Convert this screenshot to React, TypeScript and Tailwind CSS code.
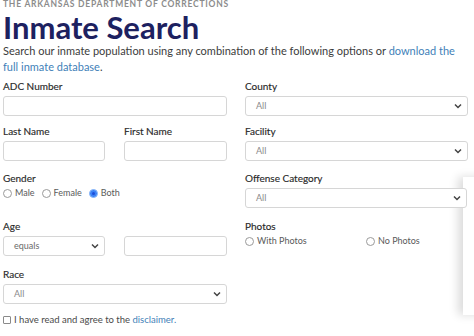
import React from "react";

const Chevron = () => (
  <svg width="8" height="6" viewBox="0 0 8 6" className="absolute right-[5px] top-1/2 -translate-y-1/2">
    <path d="M1 1.5 L4 4.5 L7 1.5" fill="none" stroke="#444" strokeWidth="1.5" />
  </svg>
);

const Label = ({ children }: { children: React.ReactNode }) => (
  <div className="text-[10px] leading-[12px] font-normal text-[#2a2a2a] mb-[4px] [-webkit-text-stroke:0.15px_#2a2a2a]">{children}</div>
);

const Input = () => <div className="h-[20px] border border-[#d6d6d6] rounded-[3px] bg-white w-full" />;

const Select = ({ value }: { value: string }) => (
  <div className="relative h-[20px] border border-[#d6d6d6] rounded-[3px] bg-white w-full flex items-center pl-[10px] text-[9px] text-[#8a8a8a]">
    {value}
    <Chevron />
  </div>
);

const Radio = ({ label, checked }: { label: string; checked?: boolean }) => (
  <span className="inline-flex items-center gap-[3px] text-[9px] leading-[10px] text-[#5a5a5a]">
    {checked ? (
      <span className="w-[9px] h-[9px] rounded-full bg-[#3b82f6] border border-[#8bb8f8] flex items-center justify-center">
        <span className="w-[3px] h-[3px] rounded-full bg-[#1d4ed8]" />
      </span>
    ) : (
      <span className="w-[9px] h-[9px] rounded-full border border-[#9a9a9a] bg-white" />
    )}
    {label}
  </span>
);

export default function App() {
  return (
    <div className="relative w-[474px] h-[336px] overflow-hidden bg-white px-[3px]" style={{ fontFamily: "Lato, 'Open Sans', sans-serif" }}>
      <div className="absolute left-[463px] top-[177px] w-[30px] h-[138px] bg-white shadow-[-5px_0_9px_rgba(0,0,0,0.14)]" />
      <div className="text-[8.5px] leading-[10px] font-bold tracking-[0.09em] text-[#8c8c8c] -mt-[1px]">
        THE ARKANSAS DEPARTMENT OF CORRECTIONS
      </div>
      <h1 className="text-[31px] leading-[32px] font-bold text-[#1d2160] mt-[2px]">Inmate Search</h1>
      <p className="text-[11px] leading-[16px] text-[#3c3c3c]">
        Search our inmate population using any combination of the following options or{" "}
        <span className="text-[#3f7fb8]">download the full inmate database</span>.
      </p>

      <div className="grid grid-cols-[224px_223px] gap-x-[18px] mt-[5px]">
        <div>
          <Label>ADC Number</Label>
          <Input />
        </div>
        <div>
          <Label>County</Label>
          <Select value="All" />
        </div>

        <div className="mt-[9px] grid grid-cols-[102px_103px] gap-x-[19px]">
          <div>
            <Label>Last Name</Label>
            <Input />
          </div>
          <div>
            <Label>First Name</Label>
            <Input />
          </div>
        </div>
        <div className="mt-[9px]">
          <Label>Facility</Label>
          <Select value="All" />
        </div>

        <div className="mt-[11px]">
          <Label>Gender</Label>
          <div className="flex items-center gap-[7px]">
            <Radio label="Male" />
            <Radio label="Female" />
            <Radio label="Both" checked />
          </div>
        </div>
        <div className="mt-[11px]">
          <Label>Offense Category</Label>
          <div className="relative z-10 w-[222px]">
            <Select value="All" />
          </div>
        </div>

        <div className="mt-[12px] grid grid-cols-[102px_103px] gap-x-[19px]">
          <div className="col-span-2">
            <Label>Age</Label>
          </div>
          <div className="relative h-[20px] border border-[#d6d6d6] rounded-[3px] bg-white w-full flex items-center pl-[10px] text-[9px] text-[#6a6a6a]">
            equals
            <Chevron />
          </div>
          <Input />
        </div>
        <div className="mt-[12px]">
          <Label>Photos</Label>
          <div className="grid grid-cols-[121px_100px]">
            <Radio label="With Photos" />
            <Radio label="No Photos" />
          </div>
        </div>

        <div className="mt-[12px]">
          <Label>Race</Label>
          <Select value="All" />
        </div>
        <div />
      </div>

      <div className="flex items-center gap-[3px] mt-[10px] text-[9.5px] leading-[12px] text-[#4a4a4a]">
        <span className="w-[8px] h-[8px] border border-[#8a8a8a] rounded-[1px] bg-white" />
        <span>
          I have read and agree to the <span className="text-[#3f7fb8]">disclaimer.</span>
        </span>
      </div>
    </div>
  );
}
